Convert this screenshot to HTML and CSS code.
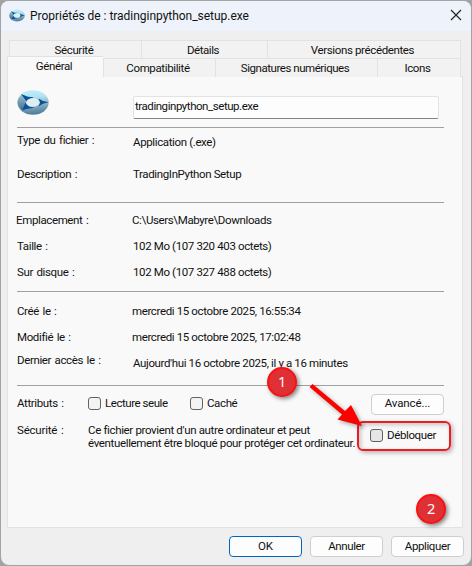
FILE: index.html
```
<!DOCTYPE html>
<html lang="fr">
<head>
<meta charset="utf-8">
<title>Propriétés</title>
<link rel="stylesheet" href="styles.css">
</head>
<body>
<svg class="defs" aria-hidden="true">
  <defs>
    <linearGradient id="sky" x1="0" y1="0" x2="0.15" y2="1">
      <stop offset="0" stop-color="#b9f3ff"/><stop offset="0.35" stop-color="#b4e2f0"/><stop offset="0.65" stop-color="#8fb4c8"/><stop offset="1" stop-color="#557f9c"/>
    </linearGradient>
    <linearGradient id="left" x1="0" y1="0" x2="0" y2="1">
      <stop offset="0" stop-color="#9cc0d0"/><stop offset="1" stop-color="#426f8c"/>
    </linearGradient>
    <symbol id="logo" viewBox="0 0 32 25">
      <ellipse cx="16" cy="12.500" rx="15.700" ry="12.200" fill="url(#sky)"/>
      <path d="M4.500 4.500L9 12.500L5 20.500Q-3.500 12.500 4.500 4.500Z" fill="url(#left)"/>
      <path d="M4 4L11 6.800L17 7.200L12.500 9L9.500 12L7.500 9Z" fill="#07539a"/>
      <path d="M5 20.500L8.500 12.500L12 16.500L17.500 17.800L10.500 18.800Z" fill="#07539a"/>
      <path d="M21.500 8.500L26 11L31.500 12.200L26 13.800L21.500 16.500L23 12.500Z" fill="#07539a"/>
      <ellipse cx="15.800" cy="12.500" rx="6.800" ry="4.300" fill="#dceff3"/>
    </symbol>
  </defs>
</svg>
<main class="window">
  <header class="titlebar">
    <svg class="app-icon"><use href="#logo"/></svg>
    <h1>Propriétés de : tradinginpython_setup.exe</h1>
    <svg class="close" viewBox="0 0 12 12"><path d="M1 1L11 11M11 1L1 11"/></svg>
  </header>
  <nav class="tabs">
    <div class="tab-row back">
      <span class="tab">Sécurité</span><span class="tab tight-s">Détails</span><span class="tab">Versions précédentes</span>
    </div>
    <div class="tab-row front">
      <span class="tab active">Général</span><span class="tab">Compatibilité</span><span class="tab tight-s">Signatures numériques</span><span class="tab">Icons</span>
    </div>
  </nav>
  <section class="panel">
    <div class="file-row">
      <svg class="file-icon"><use href="#logo"/></svg>
      <div class="name-field tight-s">tradinginpython_setup.exe</div>
    </div>
    <hr>
    <dl class="group type">
      <dt>Type du fichier :</dt><dd>Application (.exe)</dd>
      <dt>Description :</dt><dd>TradingInPython Setup</dd>
    </dl>
    <hr>
    <dl class="group place">
      <dt class="nudge">Emplacement :</dt><dd class="nudge">C:\Users\Mabyre\Downloads</dd>
      <dt>Taille :</dt><dd>102 Mo (107 320 403 octets)</dd>
      <dt>Sur disque :</dt><dd>102 Mo (107 327 488 octets)</dd>
    </dl>
    <hr>
    <dl class="group dates">
      <dt>Créé le :</dt><dd class="nudge">mercredi 15 octobre 2025, 16:55:34</dd>
      <dt>Modifié le :</dt><dd class="nudge">mercredi 15 octobre 2025, 17:02:48</dd>
      <dt class="raised">Dernier accès le :</dt><dd>Aujourd'hui 16 octobre 2025, il y a 16 minutes</dd>
    </dl>
    <hr>
    <div class="attributes">
      <span class="label">Attributs :</span>
      <span class="check readonly tight-s"><i class="box"></i>Lecture seule</span>
      <span class="check"><i class="box"></i>Caché</span>
      <button class="button advanced wide">Avancé...</button>
    </div>
    <div class="security">
      <span class="label wide">Sécurité :</span>
      <p>Ce fichier provient d'un autre ordinateur et peut<br>éventuellement être bloqué pour protéger cet ordinateur.</p>
      <div class="highlight"><span class="check"><i class="box"></i>Débloquer</span></div>
    </div>
  </section>
  <footer class="actions">
    <button class="button primary">OK</button>
    <button class="button">Annuler</button>
    <button class="button">Appliquer</button>
  </footer>
  <svg class="arrow" viewBox="0 0 60 52"><path d="M3.500 1L36 28L42 22L53 43L28.500 36.500L33 31.500L.5 4Z"/></svg>
  <span class="marker one">1</span>
  <span class="marker two">2</span>
</main>
</body>
</html>
```
FILE: styles.css
```
* { box-sizing: border-box; }
body {
  margin: 0;
  height: 566px;
  padding: 1px;
  background: #a3a3a5;
  color: #111;
  font: 11.5px/13px Roboto, "Liberation Sans", sans-serif;
  letter-spacing: -0.37px;
  overflow: hidden;
}
.defs { position: absolute; width: 0; height: 0; }
.window {
  position: relative;
  width: 470px;
  height: 564px;
  border-radius: 8px;
  background: #efefef;
  overflow: hidden;
}
.titlebar {
  display: flex;
  align-items: center;
  height: 30px;
  padding: 0 9px 0 8px;
  background: #eef3fb;
}
.app-icon { width: 16px; height: 13px; margin-bottom: 2px; }
h1 { margin: 0 auto 0 5px; font-size: 12px; font-weight: 400; letter-spacing: -0.03px; }
.close { width: 12px; height: 12px; margin-bottom: 2px; }
.close path { stroke: #222; stroke-width: 1.2; fill: none; }
.tabs { padding: 9px 10px 0 8px; }
.tab-row { display: grid; }
.back { grid-template-columns: 132px 126px 194px; height: 18px; }
.front { grid-template-columns: 94px 112px 162px 84px; height: 18px; }
.tab {
  display: flex;
  align-items: center;
  justify-content: center;
  padding: 1px 3px 0 0;
  border: 1px solid #e2e2e2;
  border-width: 1px 0 0 1px;
  background: #f2f2f2;
}
.tab:last-child { border-right-width: 1px; }
.active {
  z-index: 1;
  height: 21px;
  margin: -2px 0 0 -2px;
  padding-bottom: 2px;
  background: #f9f9f9;
}
.panel {
  width: 456px;
  height: 452px;
  margin-left: 6px;
  padding: 0 18px 0 9px;
  border: 1px solid #e2e2e2;
  background: #f9f9f9;
}
.file-row { display: flex; justify-content: space-between; height: 50px; padding: 13px 5px 0 0; }
.file-icon { width: 32px; height: 25px; }
.name-field {
  width: 306px;
  height: 23px;
  margin-top: 6px;
  padding: 3px 1px;
  border: 1px solid #e3e3e3;
  border-bottom-color: #848484;
  border-radius: 2px;
  background: #fdfdfd;
}
hr { width: 427px; height: 1px; margin: 0; border: 0; background: #a0a0a0; }
.group { display: grid; grid-template-columns: 116px 1fr; align-items: center; margin: 0; }
dt, .label { word-spacing: 1px; }
dd { margin: 0; }
.nudge { margin-left: -1px; }
.type { grid-template-rows: 28px 36px; padding-bottom: 10px; }
.type dt:first-child { margin-top: -3px; }
.place { grid-template-rows: 26px 26px 26px; padding: 4px 0 6px; }
.dates { grid-template-rows: 26px 26px 26px; padding: 6px 0 9px; }
.raised { margin-top: -6px; }
.wide { letter-spacing: -0.2px; }
.tight-s { letter-spacing: -0.45px; }
.attributes { display: flex; align-items: center; height: 36px; padding-bottom: 2px; }
.label { flex: none; width: 71px; }
.check { display: flex; align-items: center; gap: 4px; }
.box { width: 13px; height: 13px; border: 1px solid #626262; border-radius: 3px; background: #f3f3f3; }
.readonly { width: 102px; }
.button {
  width: 73px;
  height: 21px;
  padding: 0 0 1px;
  border: 1px solid #cfcfcf;
  border-radius: 4px;
  background: #fdfdfd;
  color: #111;
  font: inherit;
  letter-spacing: -0.4px;
}
.advanced { margin: 2px 0 0 auto; letter-spacing: -0.1px; }
.security { display: flex; align-items: flex-start; padding-top: 2px; }
.security p { flex: none; width: 269px; margin: 0; white-space: nowrap; letter-spacing: -0.35px; }
.highlight {
  flex: none;
  width: 94px;
  height: 30px;
  margin: -3px -8px 0 0;
  padding: 6px 0 0 11px;
  border: 2px solid #ed1c24;
  border-radius: 6px;
  box-shadow: 2px 2px 4px #0004, inset 2px 2px 4px #0003;
}
.highlight .box { background: #e6e6e6; }
.actions { display: flex; justify-content: flex-end; gap: 8px; padding: 8px 7px 0 0; }
.primary { border-color: #0067c0; letter-spacing: 0; }
.arrow { position: absolute; left: 308px; top: 382px; width: 60px; height: 52px; filter: drop-shadow(2px 2px 2px #0005); }
.arrow path { fill: #fe0000; }
.marker {
  position: absolute;
  width: 30px;
  height: 30px;
  border: 2px solid #fa1111;
  border-radius: 50%;
  background: #df3035;
  box-shadow: 2px 2px 4px #0007;
  color: #fff;
  font: 14.5px/25px "Noto Sans", sans-serif;
  text-align: center;
}
.one { left: 266px; top: 366px; }
.two { left: 415px; top: 493px; }
```
